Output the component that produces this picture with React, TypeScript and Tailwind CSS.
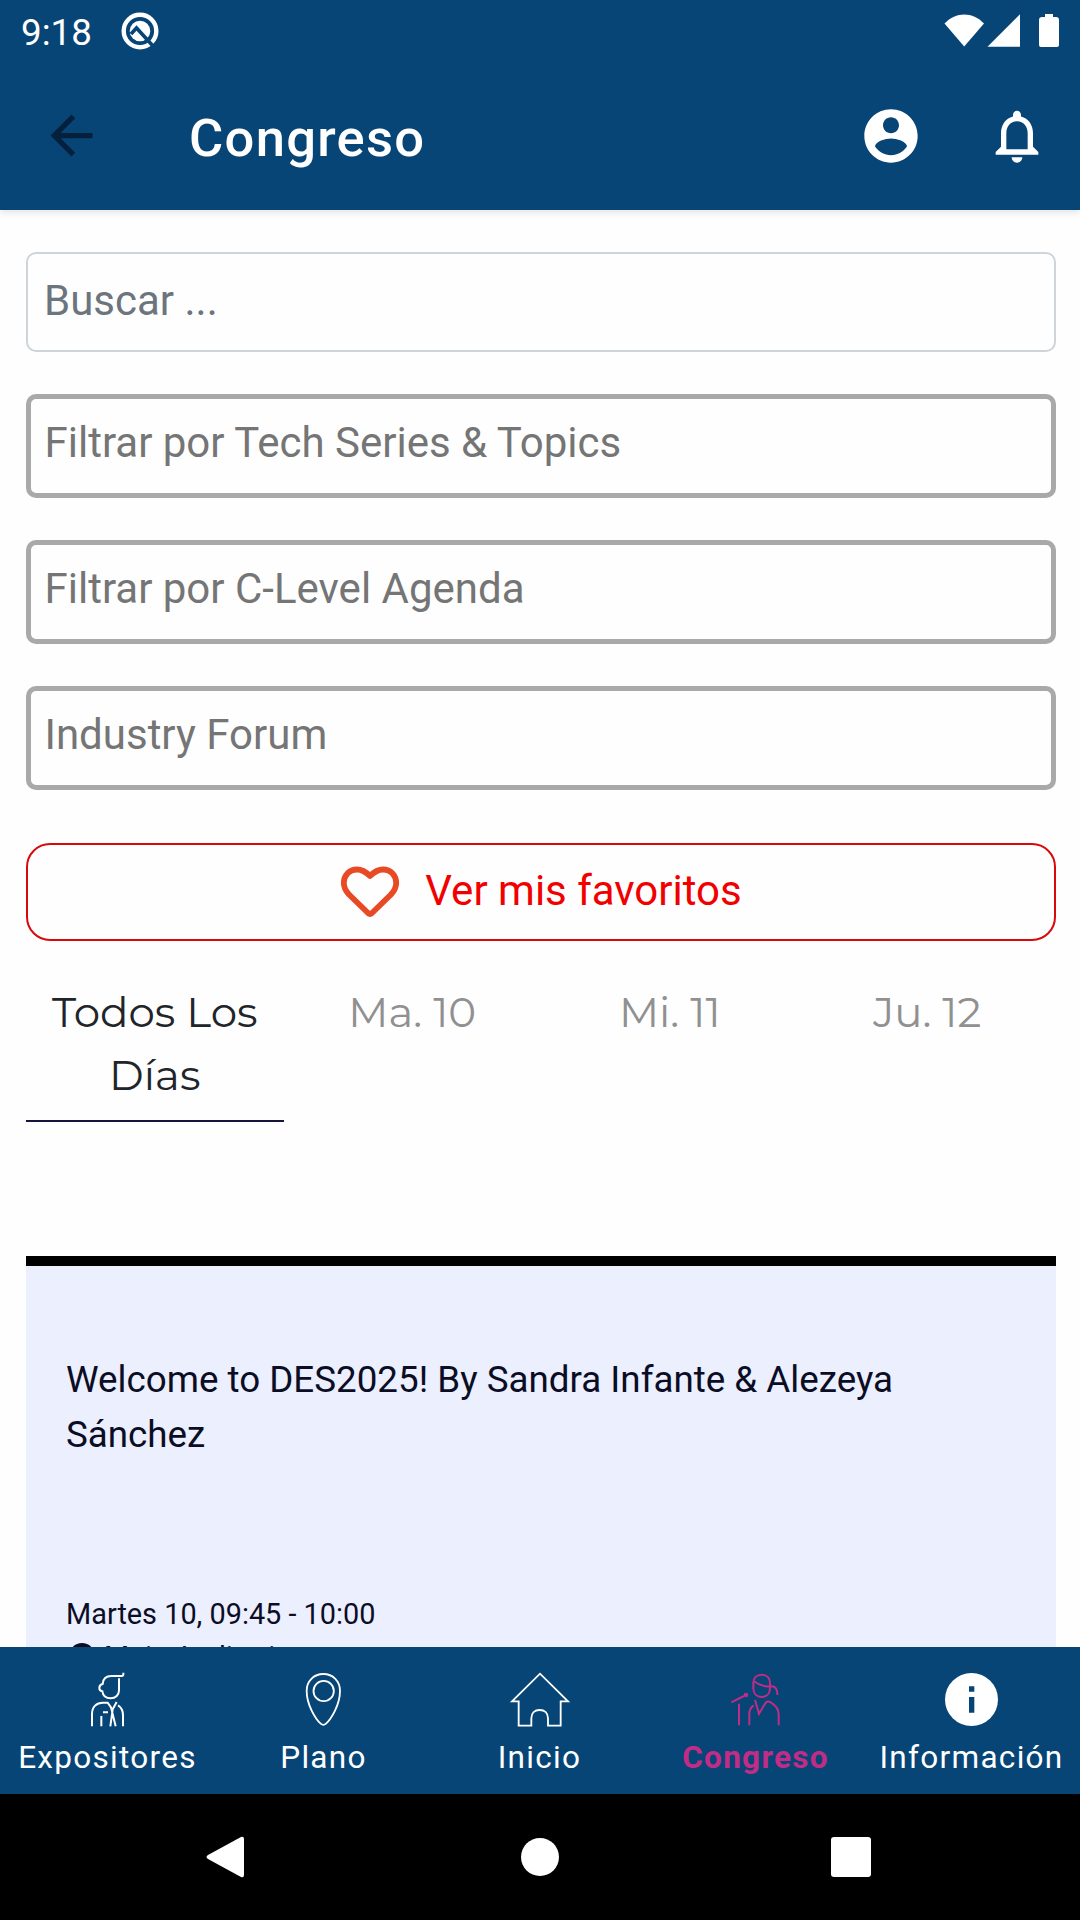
import type { ReactNode } from 'react';
import { clsx } from 'clsx';

const filters = ['Filtrar por Tech Series & Topics', 'Filtrar por C-Level Agenda', 'Industry Forum'];

const days = [
  { label: 'Todos Los Días', active: true },
  { label: 'Ma. 10', active: false },
  { label: 'Mi. 11', active: false },
  { label: 'Ju. 12', active: false },
];

function ExhibitorIcon() {
  return (
    <svg viewBox="36 42 216 216" className="size-[72px]" fill="none" stroke="currentColor" strokeWidth="6">
      <path d="M190 68v5q0 5-5 5h-31c-15 0-25 9-26 24-5 1-10 5-10 12 0 6 3 9 9 10 2 13 12 21 25 21 15 0 25-10 25-24V85" />
      <path d="M96 229v-37c0-22 14-34 32-34h15l10 14 14 57M170 156l-12 22-7 51M189 229v-33c0-14-5-24-15-30M124 229v-31M129 187h15" />
    </svg>
  );
}

function PinIcon() {
  return (
    <svg viewBox="684 42 216 216" className="size-[72px]" fill="none" stroke="currentColor" strokeWidth="5.500">
      <path d="M790 72c-29 0-50 22-50 50 0 43 27 86 42 99q8 7 16 0c15-13 42-56 42-99 0-28-21-50-50-50z" />
      <circle cx="791" cy="123" r="30.5" />
    </svg>
  );
}

function HomeIcon() {
  return (
    <svg viewBox="72 42 216 216" className="size-[72px]" fill="none" stroke="currentColor" strokeWidth="5.500">
      <path d="M96 154l84-83 84 83h-22v73h-38v-22c0-16-10-25-25-25s-25 9-25 25v22h-38v-73z" />
    </svg>
  );
}

function SpeakerIcon() {
  return (
    <svg viewBox="720 42 216 216" className="size-[72px]" fill="none" stroke="currentColor" strokeWidth="6">
      <path d="M820 99v16c0 16 10 26 25 26s25-10 25-26V99c0-15-10-25-25-25s-25 10-25 25z" />
      <path d="M820 93c16 11 31 19 52 16 14-2 21 9 20 26" />
      <path d="M808 226v-34c0-12 4-20 13-26M825 150l12 41 18-30c5-8 11-8 17-4 15 9 24 19 24 35v34M777 161v65M754 157l38-19" />
      <circle cx="798" cy="135" r="4" fill="currentColor" />
    </svg>
  );
}

function InfoIcon() {
  return (
    <svg viewBox="108 72 216 216" className="size-[72px]" fill="currentColor">
      <circle cx="214.5" cy="178.5" r="79.5" />
      <path d="M207 139h16v16h-16zM207 171h16v47h-16z" fill="#074577" />
    </svg>
  );
}

const tabs: { label: string; icon: ReactNode; active?: boolean }[] = [
  { label: 'Expositores', icon: <ExhibitorIcon /> },
  { label: 'Plano', icon: <PinIcon /> },
  { label: 'Inicio', icon: <HomeIcon /> },
  { label: 'Congreso', icon: <SpeakerIcon />, active: true },
  { label: 'Información', icon: <InfoIcon /> },
];

function StatusBar() {
  return (
    <div className="flex h-[64px] items-start justify-between pl-[21px] pr-[21px] text-white">
      <div className="flex items-start">
        <span className="mt-[11px] w-[100px] text-[36.75px] leading-[43px]">9:18</span>
        <svg viewBox="0 0 38 38" className="mt-[12px] size-[38px]" fill="none">
          <circle cx="19" cy="19" r="16.3" stroke="#fff" strokeWidth="4.4" />
          <circle cx="19" cy="19" r="10.3" fill="#fff" />
          <path d="M10 22l5.500-6L32 34" stroke="#074577" strokeWidth="3.600" />
        </svg>
      </div>
      <svg viewBox="0 0 116 36" className="mt-[13px] h-[36px] w-[116px]" fill="currentColor">
        <path d="M1.500 10.500C13-1.500 29.500-1.500 41 10.500L21.200 33.500z" />
        <path d="M44.500 33.700L77 1.200v32.500z" />
        <path d="M102 1h8v3h3q3 0 3 3v25q0 2-2 2H98q-2 0-2-2V7q0-3 3-3h3z" />
      </svg>
    </div>
  );
}

function Header() {
  return (
    <header className="relative z-10 h-[210px] shrink-0 bg-[#074577] shadow-[0_2px_8px_rgba(0,0,0,0.12)]">
      <StatusBar />
      <div className="flex h-[143px] items-center pl-[40px] pr-[31px]">
        <svg viewBox="0 0 24 24" className="size-[63px] text-[#05203c]" fill="currentColor">
          <path d="M20 11H7.830l5.590-5.590L12 4l-8 8 8 8 1.410-1.410L7.830 13H20z" />
        </svg>
        <h1 className="ml-[86px] mt-[5px] text-[52.5px] font-medium leading-[62px] tracking-[1.3px] text-white">Congreso</h1>
        <svg viewBox="0 0 24 24" className="ml-auto size-[64px] text-white" fill="currentColor">
          <path d="M12 2C6.480 2 2 6.480 2 12s4.480 10 10 10 10-4.480 10-10S17.520 2 12 2zm0 3c1.660 0 3 1.340 3 3s-1.340 3-3 3-3-1.340-3-3 1.340-3 3-3zm0 14.200c-2.500 0-4.710-1.280-6-3.220.03-1.990 4-3.080 6-3.080 1.990 0 5.970 1.090 6 3.080-1.290 1.940-3.500 3.220-6 3.220z" />
        </svg>
        <svg viewBox="0 0 24 24" className="ml-[62px] size-[64px] text-white" fill="currentColor">
          <path d="M12 22c1.100 0 2-.9 2-2h-4c0 1.100.9 2 2 2zm6-6v-5c0-3.070-1.630-5.640-4.500-6.320V4c0-.83-.67-1.500-1.500-1.500s-1.500.67-1.500 1.500v.68C7.640 5.360 6 7.920 6 11v5l-2 2v1h16v-1l-2-2zm-2 1H8v-6c0-2.480 1.510-4.500 4-4.500s4 2.020 4 4.500v6z" />
        </svg>
      </div>
    </header>
  );
}

function DayTabs() {
  return (
    <div className="mt-[40px] grid h-[141px] grid-cols-4 font-['Montserrat','Inter',sans-serif] text-[42px] leading-[63px]">
      {days.map((day) => (
        <div
          key={day.label}
          className={clsx(
            'px-4 text-center',
            day.active ? 'border-b-2 border-[#14143c] text-[#212529]' : 'text-[#909090]'
          )}
        >
          {day.label}
        </div>
      ))}
    </div>
  );
}

function SessionCard() {
  return (
    <article className="mt-[134px] h-[500px] border-t-[10px] border-black bg-[#ebeffe] px-10 pt-[86px] text-[#0b0d24]">
      <h2 className="text-[36.75px] leading-[55px]">Welcome to DES2025! By Sandra Infante & Alezeya Sánchez</h2>
      <p className="mt-[131px] text-[28.875px] leading-[43px]">Martes 10, 09:45 - 10:00</p>
      <div className="flex items-center text-[28.875px] leading-[43px]">
        <svg viewBox="0 0 24 28" className="ml-[3px] h-[30px] w-[26px]" fill="currentColor">
          <path d="M12 0a12 12 0 0 0-12 12c0 7 12 16 12 16s12-9 12-16A12 12 0 0 0 12 0z" />
        </svg>
        <span className="ml-[9px]">Main Auditorium</span>
      </div>
    </article>
  );
}

export default function App() {
  return (
    <div className="flex h-[1920px] w-[1080px] flex-col overflow-hidden bg-[#fefefe] font-['Roboto',sans-serif]">
      <Header />

      <main className="min-h-0 flex-1 overflow-hidden pl-[26px] pr-[24px] pt-[42px]">
        <div className="flex h-[100px] items-center rounded-[10px] border-2 border-[#ced4d8] px-[16px] pb-[3px] text-[42px] text-[#6c757d]">
          Buscar ...
        </div>

        <div className="mt-[42px] flex flex-col gap-[42px]">
          {filters.map((filter) => (
            <div
              key={filter}
              className="h-[104px] rounded-[10px] border-[5px] border-[#a9a9a9] px-[13.5px] pt-[12px] text-[42px] leading-[63px] text-[#757575]"
            >
              {filter}
            </div>
          ))}
        </div>

        <button className="mt-[53px] flex h-[98px] w-full items-center justify-center rounded-[24px] border-2 border-[#d8080c] text-[42px] text-[#f20000]">
          <svg viewBox="0 0 60 52" className="mr-[25px] h-[52px] w-[60px]" fill="none" stroke="#e94a26" strokeWidth="5.800" strokeLinejoin="round">
            <path d="M30 10c-5-5-9-6.500-13-6.500C9 3.500 3.800 9.500 3.800 17c0 5 2 8 5.200 11.500l19 18.500q2 1.800 4 0l19-18.500c3.200-3.500 5.200-6.500 5.200-11.500 0-7.500-5.200-13.500-13.200-13.500-4 0-8 1.500-13 6.500z" />
          </svg>
          <span className="-mt-[4px]">Ver mis favoritos</span>
        </button>

        <DayTabs />
        <SessionCard />
      </main>

      <nav className="grid h-[147px] shrink-0 grid-cols-5 bg-[#074577] pt-[17px]">
        {tabs.map((tab) => (
          <div
            key={tab.label}
            className={clsx('flex flex-col items-center', tab.active ? 'font-bold text-[#c02c86]' : 'text-white')}
          >
            {tab.icon}
            <span className="mr-[1px] mt-[1px] whitespace-nowrap text-[31.5px] leading-[42px] tracking-[1.3px]">{tab.label}</span>
          </div>
        ))}
      </nav>

      <div className="flex h-[126px] shrink-0 items-center bg-black pl-[206px] text-white">
        <svg viewBox="0 0 38 42" className="h-[42px] w-[38px]" fill="currentColor">
          <path d="M35 1q3-1 3 2v36q0 3-3 2L2 23q-3-2 0-4z" />
        </svg>
        <div className="ml-[277px] size-[38px] rounded-full bg-white" />
        <div className="ml-[272px] size-[40px] rounded-[3px] bg-white" />
      </div>
    </div>
  );
}
